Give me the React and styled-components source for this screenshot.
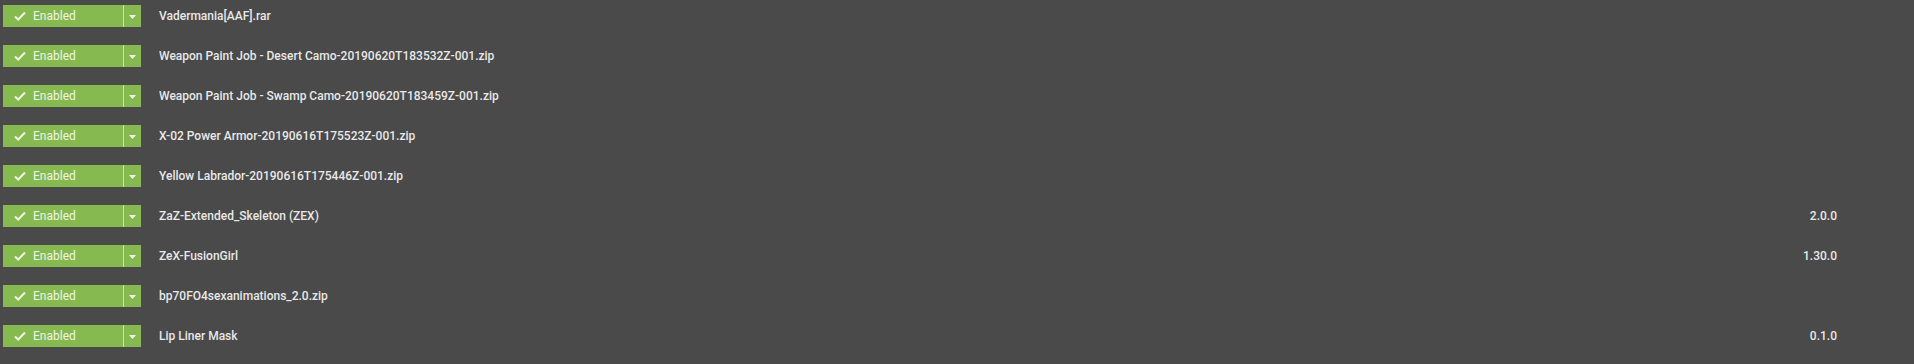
import React from "react";
import styled, { createGlobalStyle } from "styled-components";

const GlobalStyle = createGlobalStyle`
  html, body {
    margin: 0;
    padding: 0;
    background: #4a4a4a;
  }
  body {
    font-family: Roboto, "Liberation Sans", sans-serif;
  }
`;

const mods = [
  { name: "Vadermania[AAF].rar", version: "" },
  { name: "Weapon Paint Job - Desert Camo-20190620T183532Z-001.zip", version: "" },
  { name: "Weapon Paint Job - Swamp Camo-20190620T183459Z-001.zip", version: "" },
  { name: "X-02 Power Armor-20190616T175523Z-001.zip", version: "" },
  { name: "Yellow Labrador-20190616T175446Z-001.zip", version: "" },
  { name: "ZaZ-Extended_Skeleton (ZEX)", version: "2.0.0" },
  { name: "ZeX-FusionGirl", version: "1.30.0" },
  { name: "bp70FO4sexanimations_2.0.zip", version: "" },
  { name: "Lip Liner Mask", version: "0.1.0" },
];

function App() {
  return (
    <>
      <GlobalStyle />
      <List>
        {mods.map((m) => (
          <Row key={m.name}>
            <StatusButton>
              <StatusMain>
                <svg width="12" height="10" viewBox="0 0 12 10">
                  <polyline
                    points="1,5.5 4.2,8.5 11,1.5"
                    fill="none"
                    stroke="#eef5e4"
                    strokeWidth="2"
                  />
                </svg>
                <StatusLabel>Enabled</StatusLabel>
              </StatusMain>
              <Divider />
              <Caret>
                <svg width="7" height="4" viewBox="0 0 7 4">
                  <polygon points="0,0 7,0 3.5,4" fill="#eef5e4" />
                </svg>
              </Caret>
            </StatusButton>
            <ModName>{m.name}</ModName>
            <Version>{m.version}</Version>
          </Row>
        ))}
      </List>
    </>
  );
}

const List = styled.div`
  display: flex;
  flex-direction: column;
  padding: 5px 77px 0 3px;
`;

const Row = styled.div`
  display: flex;
  align-items: center;
  height: 22px;
  margin-bottom: 18px;
`;

const StatusButton = styled.div`
  display: flex;
  align-items: stretch;
  width: 138px;
  height: 22px;
  background: #86b94f;
  flex-shrink: 0;
`;

const StatusMain = styled.div`
  display: flex;
  align-items: center;
  width: 120px;
  padding-left: 11px;
  box-sizing: border-box;
`;

const StatusLabel = styled.span`
  margin-left: 7px;
  font-size: 12px;
  color: #eef5e4;
`;

const Divider = styled.div`
  width: 1px;
  background: #c9e2aa;
`;

const Caret = styled.div`
  flex: 1;
  display: flex;
  align-items: center;
  justify-content: center;
  padding-top: 1px;
`;

const ModName = styled.div`
  flex: 1;
  margin-left: 18px;
  font-size: 12px;
  font-weight: 500;
  color: #e8e8e8;
  white-space: nowrap;
`;

const Version = styled.div`
  font-size: 12px;
  font-weight: 500;
  color: #e8e8e8;
  text-align: right;
`;

export default App;
